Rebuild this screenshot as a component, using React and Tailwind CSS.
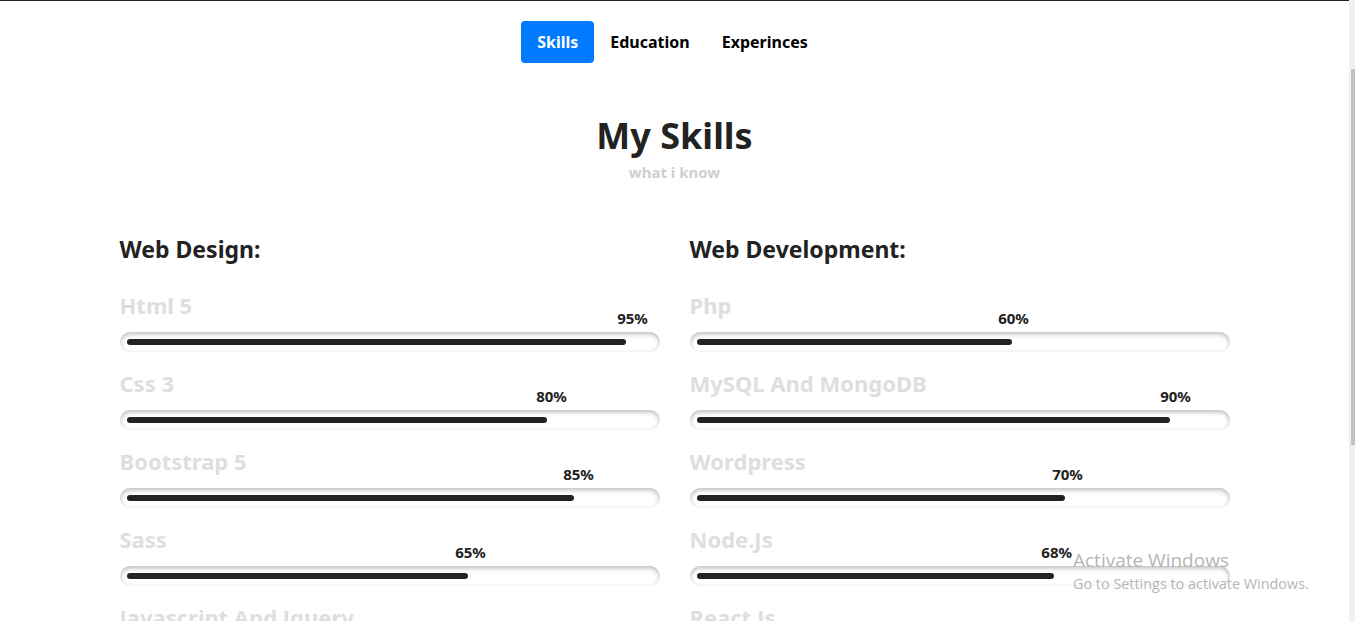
import { useState } from 'react';

const designSkills = [
    { name: 'Html 5', value: 95 },
    { name: 'Css 3', value: 80 },
    { name: 'Bootstrap 5', value: 85 },
    { name: 'Sass', value: 65 },
    { name: 'Javascript And Jquery', value: 75 },
];

const devSkills = [
    { name: 'Php', value: 60 },
    { name: 'MySQL And MongoDB', value: 90 },
    { name: 'Wordpress', value: 70 },
    { name: 'Node.Js', value: 68 },
    { name: 'React.Js', value: 70 },
];

const tabs = ['Skills', 'Education', 'Experinces'];

const SkillBar = ({ name, value }) => {
    return (
        <div className="mb-4">
            <div className="text-[22px] leading-[30px] font-bold text-[#dedede]">{name}</div>
            <div className="relative mt-3">
                {/* percent label sits above the bar, centred on the value */}
                <span
                    className="absolute -top-[24px] -translate-x-1/2 text-[15px] leading-5 font-bold text-[#222]"
                    style={{ left: `${value}%` }}
                >
                    {value}%
                </span>
                <div className="h-5 rounded-full bg-white shadow-[inset_0_2px_5px_rgba(0,0,0,0.28)] px-[7px] flex items-center">
                    <div className="w-full">
                        <div className="h-[6px] rounded-full bg-[#222]" style={{ width: `${value}%` }} />
                    </div>
                </div>
            </div>
        </div>
    );
};

const SkillColumn = ({ title, skills }) => (
    <div>
        <h3 className="text-[23px] leading-[30px] font-bold text-[#222] mb-[26px]">{title}</h3>
        {skills.map((s) => (
            <SkillBar key={s.name} {...s} />
        ))}
    </div>
);

export default function App() {
    const [active, setActive] = useState('Skills');

    return (
        <div
            className="h-[621px] overflow-hidden flex bg-white relative"
            style={{ fontFamily: '"Noto Sans", "Open Sans", sans-serif' }}
        >
            <main className="flex-1 border-t border-[#222]">
                <div className="w-[1110px] mx-auto">
                    {/* Tabs */}
                    <nav className="flex justify-center mt-5 -ml-[4px]">
                        {tabs.map((t) => (
                            <button
                                key={t}
                                onClick={() => setActive(t)}
                                className={`px-4 py-[9px] rounded text-base leading-6 font-bold ${
                                    active === t ? 'bg-[#007bff] text-white' : 'text-black'
                                }`}
                            >
                                {t}
                            </button>
                        ))}
                    </nav>

                    {/* Heading */}
                    <div className="text-center mt-[51px]">
                        <h2 className="text-[36px] leading-[44px] font-bold text-[#222]">My Skills</h2>
                        <p className="text-[15px] leading-5 font-bold text-[#cfcfcf] mt-1">what i know</p>
                    </div>

                    {/* Columns */}
                    <div className="grid grid-cols-2 gap-[30px] mt-[52px]">
                        <SkillColumn title="Web Design:" skills={designSkills} />
                        <SkillColumn title="Web Development:" skills={devSkills} />
                    </div>
                </div>
            </main>

            {/* Scrollbar */}
            <div className="w-[6px] bg-[#f0f0f0] relative">
                <div className="absolute left-[2px] top-[69px] w-[4px] h-[376px] bg-[#c1c1c1]" />
            </div>

            {/* Windows activation watermark */}
            <div
                className="absolute left-[1073px] top-[548px] text-[#b5b5b5] pointer-events-none"
                style={{ fontFamily: '"Open Sans", "Noto Sans", sans-serif' }}
            >
                <div className="text-[19px] leading-6">Activate Windows</div>
                <div className="text-[14.4px] leading-5 mt-[2px]">Go to Settings to activate Windows.</div>
            </div>
        </div>
    );
}
